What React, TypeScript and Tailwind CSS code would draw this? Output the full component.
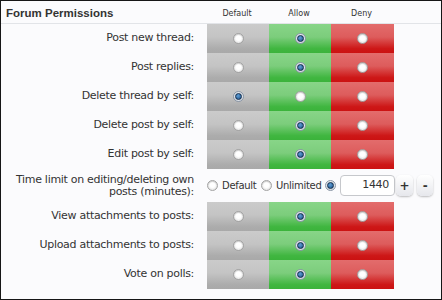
import React from "react";

type Choice = "default" | "allow" | "deny";

const ROWS: { label: string; value: Choice }[] = [
  { label: "Post new thread:", value: "allow" },
  { label: "Post replies:", value: "allow" },
  { label: "Delete thread by self:", value: "default" },
  { label: "Delete post by self:", value: "allow" },
  { label: "Edit post by self:", value: "allow" },
];

const ROWS2: { label: string; value: Choice }[] = [
  { label: "View attachments to posts:", value: "allow" },
  { label: "Upload attachments to posts:", value: "allow" },
  { label: "Vote on polls:", value: "allow" },
];

function Radio({ checked }: { checked: boolean }) {
  return checked ? (
    <span className="flex h-[11px] w-[11px] shrink-0 items-center justify-center rounded-full border border-[#8a96a6] bg-[radial-gradient(circle_at_50%_40%,#ffffff,#c9d0da)]">
      <span className="h-[7px] w-[7px] rounded-full border border-[#0f2a4a] bg-[radial-gradient(circle_at_40%_35%,#5f9fd6,#1c4f86)]" />
    </span>
  ) : (
    <span className="flex h-[11px] w-[11px] shrink-0 items-center justify-center rounded-full border border-[#a3a3a3] bg-[radial-gradient(circle_at_50%_45%,#ffffff_35%,#d4d4d4)] shadow-[inset_0_1px_1px_rgba(0,0,0,0.15)]" />
  );
}

function PermRow({ label, value }: { label: string; value: Choice }) {
  return (
    <div className="flex h-[29px]">
      <div className="flex w-[206px] shrink-0 items-center justify-end whitespace-nowrap pr-[13px] text-[11px] tracking-[-0.3px] text-[#333]">
        {label}
      </div>
      <div className="flex w-[62px] shrink-0 items-center justify-center bg-[linear-gradient(to_bottom,#cbcbcb_0%,#c4c4c4_45%,#acacac_85%,#a9a9a9_100%)]">
        <Radio checked={value === "default"} />
      </div>
      <div className="flex w-[62px] shrink-0 items-center justify-center bg-[linear-gradient(to_bottom,#88d588_0%,#7ccd7c_45%,#40b640_85%,#3bb33b_100%)]">
        <Radio checked={value === "allow"} />
      </div>
      <div className="flex w-[63px] shrink-0 items-center justify-center bg-[linear-gradient(to_bottom,#e36c6c_0%,#dd5c5c_45%,#cd1717_85%,#cb1212_100%)]">
        <Radio checked={value === "deny"} />
      </div>
    </div>
  );
}

export default function App() {
  return (
    <div
      className="h-[300px] w-[442px] overflow-hidden border border-[#161616] bg-[#fbfbfd]"
      style={{ fontFamily: '"DejaVu Sans", sans-serif' }}
    >
      {/* Heading */}
      <div className="flex h-[23px] items-center border-b border-[#e2e4e8] pt-[4px]">
        <div
          className="w-[205px] shrink-0 pl-[5px] text-[11.5px] font-bold text-[#333]"
          style={{ fontFamily: '"Liberation Sans", sans-serif' }}
        >
          Forum Permissions
        </div>
        <div className="flex text-[8px] text-[#333]">
          <span className="w-[62px] text-center">Default</span>
          <span className="w-[62px] text-center">Allow</span>
          <span className="w-[63px] text-center">Deny</span>
        </div>
      </div>

      {ROWS.map((r) => (
        <PermRow key={r.label} {...r} />
      ))}

      {/* Time limit */}
      <div className="flex h-[33px]">
        <div className="flex w-[206px] shrink-0 flex-col items-end justify-center whitespace-nowrap pr-[13px] text-right text-[11px] leading-[12px] tracking-[-0.3px] text-[#333]">
          <span>Time limit on editing/deleting own</span>
          <span>posts (minutes):</span>
        </div>
        <div className="flex items-center whitespace-nowrap text-[10px] tracking-[-0.3px] text-[#333]">
          <Radio checked={false} />
          <span className="ml-[4px] w-[39px]">Default</span>
          <Radio checked={false} />
          <span className="ml-[4px] w-[49px]">Unlimited</span>
          <Radio checked={true} />
          <div className="ml-[4px] flex h-[21px] w-[55px] shrink-0 items-center justify-end rounded-[4px] border border-[#c6c8cc] bg-white pr-[5px] text-[11px]">
            1440
          </div>
          <button className="ml-[1px] flex h-[21px] w-[17px] shrink-0 items-center justify-center rounded-[5px] bg-[linear-gradient(to_bottom,#ffffff,#e6e7ec)] text-[12px] font-bold shadow-[0_1px_2px_rgba(0,0,0,0.25)]">
            +
          </button>
          <button className="ml-[4px] flex h-[21px] w-[16px] shrink-0 items-center justify-center rounded-[5px] bg-[linear-gradient(to_bottom,#ffffff,#e6e7ec)] text-[12px] font-bold shadow-[0_1px_2px_rgba(0,0,0,0.25)]">
            -
          </button>
        </div>
      </div>

      {ROWS2.map((r) => (
        <PermRow key={r.label} {...r} />
      ))}
    </div>
  );
}
